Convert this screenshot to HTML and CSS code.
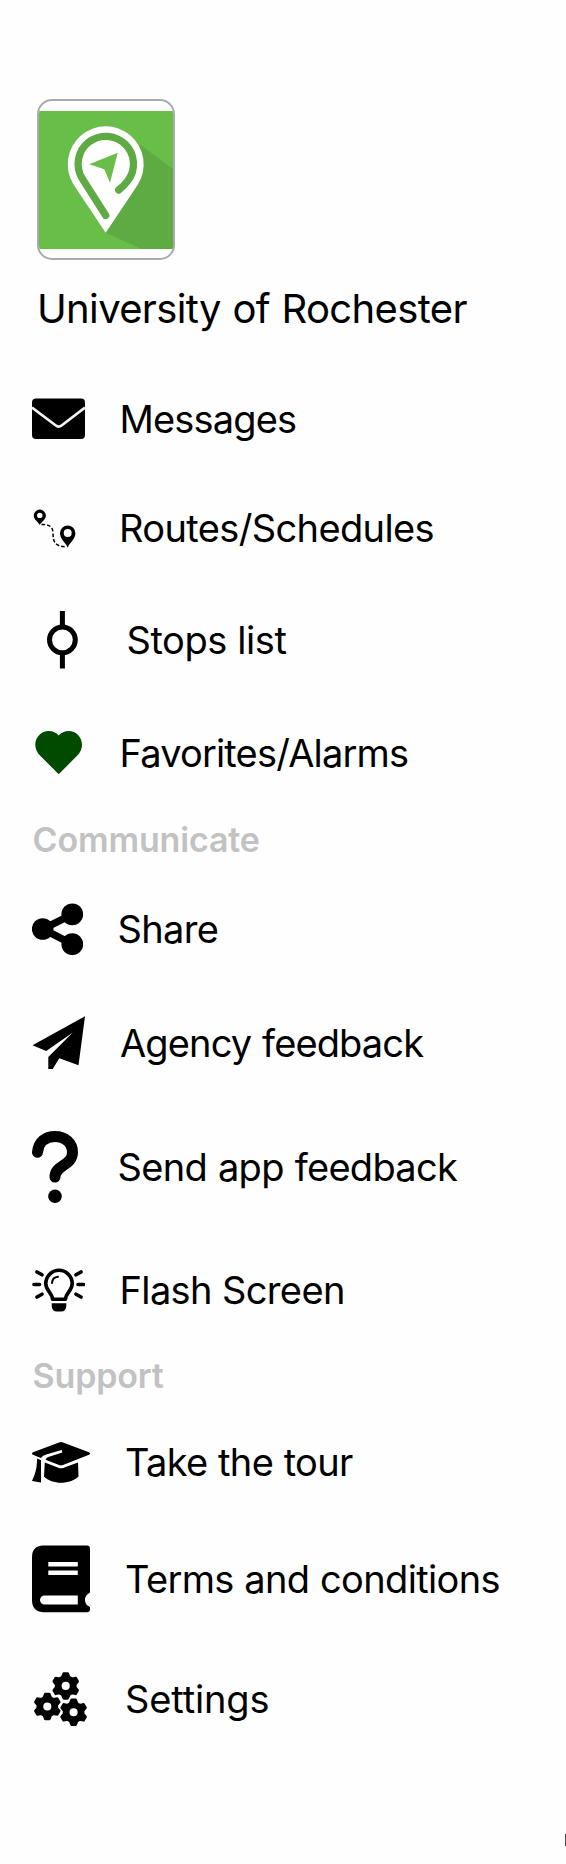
FILE: index.html
```
<!DOCTYPE html>
<html lang="en">
<head>
<meta charset="utf-8">
<title>University of Rochester</title>
<link rel="stylesheet" href="styles.css">
</head>
<body>
<main class="drawer">
  <header class="agency">
    <div class="logo">
      <svg width="134" height="138" viewBox="0 0 134 138">
        <path fill="#69bd49" d="M0 0h134v138H0z"/>
        <path fill="#5fab43" d="M101 33.500L134 58v80h-31.300L66.700 121.700z"/>
        <path fill="#fff" d="M66.700 121.700L34.500 73.500A38 38 0 1 1 98.900 73.500z"/>
        <path fill="none" stroke="#5fab43" stroke-width="7.300" stroke-linecap="round" d="M66.700 104.500L43.200 67.500A27.700 27.700 0 1 1 88.500 70.200Q85 75 79.700 79"/>
        <path fill="#69bd49" d="M78.700 41.700L50.300 53.300l15 5L71 71.700z"/>
      </svg>
    </div>
    <h1 class="agency-name">University of Rochester</h1>
  </header>

  <nav class="menu">
    <a class="item messages">
      <svg width="53" height="42" viewBox="0 0 53 42"><rect y=".5" width="53" height="40.500" rx="4"/><path fill="none" stroke="#f4f4f4" stroke-width="2.600" d="M0 9.500L23.500 27.300Q26.700 30 29.900 27.300L53 9.500"/></svg>
      <span>Messages</span>
    </a>
    <a class="item routes">
      <svg width="52.500" height="40" viewBox="0 0 52.500 40">
        <path fill-rule="evenodd" d="M7.800 17C6 13.500 1.700 11.500 1.700 7.700a6.100 6.100 0 0 1 12.200 0C13.900 11.500 9.500 13.500 7.800 17zM7.800 4.700a2.700 2.700 0 1 0 0 5.400 2.700 2.700 0 0 0 0-5.400z"/>
        <path fill-rule="evenodd" d="M35.700 39.700C33.700 34.500 28 31 28 25.200a7.700 7.700 0 0 1 15.400 0C43.400 31 37.700 34.500 35.700 39.700zM35.700 21a4 4 0 1 0 0 8 4 4 0 0 0 0-8z"/>
        <path fill="none" stroke="#000" stroke-width="1.500" stroke-dasharray="3.600 2" d="M9.500 16.600C17 16 21 19 21 25c0 7 1 14 13.500 13.800"/>
      </svg>
      <span>Routes/Schedules</span>
    </a>
    <a class="item stops">
      <svg width="60" height="58" viewBox="0 0 60 58"><g fill="none" stroke="#000" stroke-width="5"><circle cx="30.400" cy="28.800" r="12.900"/><path d="M30.400 0v16M30.400 41.500v16"/></g></svg>
      <span>Stops list</span>
    </a>
    <a class="item favorites">
      <svg width="53" height="44" viewBox="0 0 53 44"><path fill="#004b00" d="M26.700 43.300L8.500 25C5 21.500 3.300 18 3.300 13.700 3.300 6 9.500 0 16.700 0c4 0 7.500 1.600 10 4.500C29.200 1.600 32.700 0 36.700 0 44 0 50 6 50 13.700c0 4.300-1.700 7.800-5.200 11.300z"/></svg>
      <span>Favorites/Alarms</span>
    </a>

    <h2 class="section">Communicate</h2>
    <a class="item share">
      <svg width="51" height="52" viewBox="0 0 51 52"><circle cx="10.700" cy="26" r="10.800"/><circle cx="40.300" cy="11.300" r="10.900"/><circle cx="40.300" cy="41.200" r="10.900"/><path fill="none" stroke="#000" stroke-width="7.500" d="M40 11.500L11 26l29 15"/></svg>
      <span>Share</span>
    </a>
    <a class="item agency-feedback">
      <svg width="53.500" height="54" viewBox="0 0 53.500 54"><path d="M53 .300L46.500 49.300 27.300 42.200 20.700 53h-4.400V41L40.800 16.600 14.200 35 .500 29.300z"/></svg>
      <span>Agency feedback</span>
    </a>
    <a class="item app-feedback">
      <svg width="51" height="74" viewBox="0 0 51 74"><path fill="none" stroke="#000" stroke-width="11" stroke-linecap="round" d="M5.500 22.200C6.500 12 13.500 6.500 23 6.500c10 0 17.500 6.500 17.500 15.800C40.500 36 23 34.500 23 47"/><circle cx="23" cy="66.200" r="6.800"/></svg>
      <span>Send app feedback</span>
    </a>
    <a class="item flash">
      <svg width="53" height="44" viewBox="0 0 53 44">
        <g fill="none" stroke="#000" stroke-width="3.600" stroke-linecap="round"><path stroke-linejoin="round" d="M20.500 31.300C20.500 25 13.800 23 13.800 15.500a13.200 13.200 0 0 1 26.400 0C40.200 23 33.500 25 33.500 31.300z"/><path d="M2 16.500h5.500M46 16.500h5.500M5 4l5 2.800M49 4l-5 2.800M5 29l5-2.800M49 29l-5-2.800"/></g>
        <path fill="none" stroke="#000" stroke-width="2" stroke-linecap="round" d="M20 15c.200-3.800 2.600-6 6-6.300"/>
        <path d="M19.700 35.200h14.600v2.500q0 5.800-5.300 5.800h-4q-5.300 0-5.300-5.800z"/>
      </svg>
      <span>Flash Screen</span>
    </a>

    <h2 class="section">Support</h2>
    <a class="item tour">
      <svg width="58.500" height="42" viewBox="0 0 58.500 42">
        <path d="M27 1.400Q29 .700 31 1.400L57 11.300q2 1.400 0 2.500L31 24q-2 .800-4 0L13.500 18.800Q14.500 16.500 17 15.800L30.300 11.500 29.700 8.900 15 13.200Q10.500 14.500 8.800 17L1 13.800q-2-1.100 0-2.500z"/>
        <path d="M5.200 17.500L9 19.200V41.500L0 40Q4.500 30 4.700 24zM12.800 21.500L27 27q2 .700 4 0l15-5.500.500 14C38 43.800 20 43.800 12 35.500z"/>
      </svg>
      <span>Take the tour</span>
    </a>
    <a class="item terms">
      <svg width="58.500" height="68" viewBox="0 0 58.500 68"><path fill-rule="evenodd" d="M11 .500H55q3 0 3 3.200V47.500Q53 50 53 55t5 7v2.500q0 2.700-3 2.700H11Q0 66.500 0 55V12Q0 1 11 .500zM16.300 17v4.500h29.500V17zM16.300 25.500V30h29.500v-4.500zM12.500 50.500a4.500 4.500 0 0 0 0 9h33.300v-9z"/></svg>
      <span>Terms and conditions</span>
    </a>
    <a class="item settings">
      <svg width="58.500" height="58" viewBox="0 0 58.500 58">
        <defs><path id="gear" fill-rule="evenodd" stroke="#000" stroke-width="2.500" stroke-linejoin="round" d="M-2-12.500H2L3.500-8.800 6.200-7.200 10-8 12-4.500 9.600-1.500V1.500L12 4.500 10 8 6.200 7.200 3.500 8.800 2 12.500H-2L-3.500 8.800-6.200 7.200-10 8-12 4.500-9.600 1.500V-1.500L-12-4.500-10-8-6.200-7.200-3.500-8.800zM0-5.300a5.300 5.300 0 1 0 0 10.600A5.300 5.300 0 0 0 0-5.300z"/></defs>
        <use href="#gear" x="33.700" y="15.900"/><use href="#gear" x="15.300" y="36.500"/><use href="#gear" x="41.600" y="42.300"/>
      </svg>
      <span>Settings</span>
    </a>
  </nav>
  <div class="edge-handle"></div>
</main>
</body>
</html>
```
FILE: styles.css
```
* { box-sizing: border-box; }

body {
  margin: 0;
  background: #fefefe;
  color: #000;
  font-family: "Inter", "Liberation Sans", sans-serif;
}

.drawer {
  position: relative;
  height: 1864px;
  padding-top: 99px;
  overflow: hidden;
}

.agency { height: 265px; padding-left: 37px; }

.logo {
  display: flex;
  align-items: center;
  width: 138px;
  height: 161px;
  border: 2px solid #aaa;
  border-radius: 15px;
  background: #fff;
  overflow: hidden;
}

.agency-name {
  margin: 25px 0 0;
  font-size: 40px;
  font-weight: 400;
  line-height: 48px;
  letter-spacing: -.65px;
  word-spacing: 1px;
  white-space: nowrap;
}

.menu { display: flex; flex-direction: column; }

.item {
  display: flex;
  align-items: center;
  gap: 34.500px;
  padding-left: 32px;
  font-size: 38px;
  line-height: 46px;
  white-space: nowrap;
}

.item svg { flex: none; }

.section {
  margin: 0;
  height: 62px;
  padding-left: 32.500px;
  color: #c2c2c2;
  font-size: 34px;
  font-weight: 600;
  line-height: 64px;
  letter-spacing: -.15px;
}

.messages { height: 110px; letter-spacing: -.85px; }
.routes { height: 108px; letter-spacing: -.63px; }
.stops { height: 116px; letter-spacing: -.41px; }
.favorites { height: 110px; letter-spacing: -.82px; }
.share { height: 118px; letter-spacing: -.65px; }
.agency-feedback { height: 110px; letter-spacing: -.87px; word-spacing: 1px; }
.app-feedback { height: 137px; letter-spacing: -.7px; word-spacing: 1px; }
.flash { height: 109px; letter-spacing: -.62px; }
.tour { height: 112px; letter-spacing: -.67px; word-spacing: .5px; }
.terms { height: 121px; letter-spacing: -.64px; word-spacing: .5px; }
.settings { height: 119px; letter-spacing: -.13px; }

.edge-handle {
  position: absolute;
  top: 1834px;
  right: 0;
  width: 1px;
  height: 12px;
  background: #444;
}
```
